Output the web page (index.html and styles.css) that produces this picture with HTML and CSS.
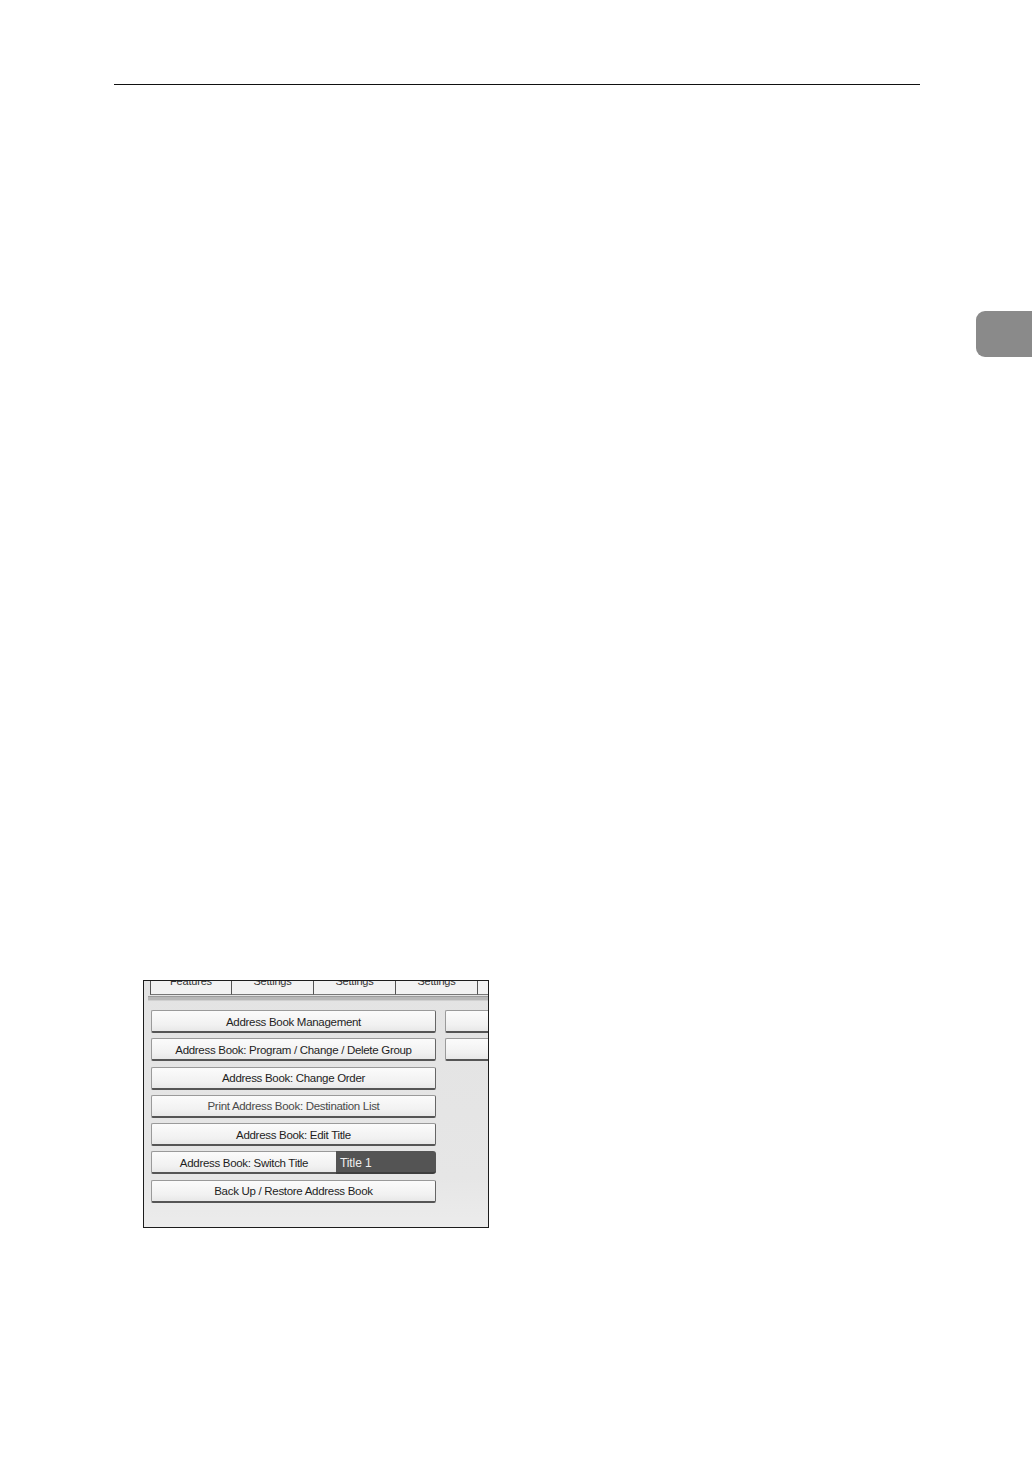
FILE: index.html
```html
<!DOCTYPE html>
<html lang="en">
<head>
<meta charset="utf-8">
<title>Address Book settings</title>
<link rel="stylesheet" href="styles.css">
</head>
<body>
<div class="page">
  <div class="rule"></div>
  <div class="thumb"></div>
  <div class="panel">
    <div class="tabs">
      <div class="tab"><span>Features</span></div>
      <div class="tab"><span>Settings</span></div>
      <div class="tab"><span>Settings</span></div>
      <div class="tab"><span>Settings</span></div>
      <div class="tab tab-last"><span>Settings</span></div>
    </div>
    <div class="groove"></div>
    <div class="content">
      <div class="col-left">
        <div class="btn">Address Book Management</div>
        <div class="btn">Address Book: Program / Change / Delete Group</div>
        <div class="btn">Address Book: Change Order</div>
        <div class="btn btn-dim">Print Address Book: Destination List</div>
        <div class="btn">Address Book: Edit Title</div>
        <div class="switch-row">
          <div class="btn btn-switch">Address Book: Switch Title</div>
          <div class="value">Title 1</div>
        </div>
        <div class="btn">Back Up / Restore Address Book</div>
      </div>
      <div class="col-right">
        <div class="btn"></div>
        <div class="btn"></div>
      </div>
    </div>
  </div>
</div>
</body>
</html>
```
FILE: styles.css
```css
html, body {
  margin: 0;
  padding: 0;
  background: #ffffff;
}

.page {
  width: 1032px;
  height: 1458px;
  overflow: hidden;
  font-family: "Liberation Sans", Arial, sans-serif;
}

.rule {
  margin-top: 84px;
  margin-left: 114px;
  width: 806px;
  height: 1px;
  background: #111;
}

.thumb {
  margin-top: 226px;
  margin-left: 976px;
  width: 56px;
  height: 46px;
  background: #8a8a8a;
  border-radius: 9px 0 0 9px;
}

.panel {
  margin-top: 623px;
  margin-left: 143px;
  width: 346px;
  height: 248px;
  box-sizing: border-box;
  border: 1px solid #1c1c1c;
  background: linear-gradient(#e3e3e3, #e6e6e6 80%, #ececec);
  overflow: hidden;
}

.tabs {
  display: flex;
  height: 14px;
  padding-left: 6px;
}

.tab {
  width: 82px;
  flex-shrink: 0;
  height: 14px;
  box-sizing: border-box;
  border-right: 1px solid #555;
  border-bottom: 1px solid #777;
  background: #f2f2f2;
  overflow: hidden;
  text-align: center;
  font-size: 11px;
  color: #333;
  letter-spacing: -0.2px;
}

.tab:first-child {
  border-left: 1px solid #555;
}

.tab span {
  display: block;
  line-height: 14px;
  margin-top: -7px;
}

.groove {
  margin: 1px 0 0 4px;
  height: 3px;
  background: #b8b8b8;
  border-top: 1px solid #9c9c9c;
  border-bottom: 1px solid #d0d0d0;
}

.content {
  display: flex;
  gap: 9px;
  padding: 9px 0 0 7px;
}

.col-left {
  width: 285px;
  flex-shrink: 0;
  display: grid;
  grid-auto-rows: 23px;
  row-gap: 5.3px;
}

.col-right {
  width: 60px;
  flex-shrink: 0;
  display: grid;
  grid-auto-rows: 23px;
  row-gap: 5.3px;
  align-content: start;
}

.btn {
  box-sizing: border-box;
  height: 23px;
  padding-top: 1px;
  background: linear-gradient(#fbfbfb, #f1f1f1 70%, #e8e8e8);
  border: 1px solid #9a9a9a;
  border-right-color: #666;
  border-bottom: 2px solid #555;
  border-radius: 2px;
  display: flex;
  align-items: center;
  justify-content: center;
  font-size: 11.5px;
  letter-spacing: -0.3px;
  color: #1e1e1e;
  white-space: nowrap;
}

.btn-dim {
  color: #4a4a4a;
}

.switch-row {
  display: flex;
  height: 23px;
}

.btn-switch {
  width: 185px;
  flex-shrink: 0;
  border-right: none;
  border-radius: 2px 0 0 2px;
}

.value {
  flex: 1;
  box-sizing: border-box;
  height: 23px;
  padding-top: 2px;
  background: #545454;
  border-radius: 0 3px 3px 0;
  border-bottom: 2px solid #3e3e3e;
  color: #efefef;
  font-size: 12px;
  padding-left: 4px;
  display: flex;
  align-items: center;
  letter-spacing: -0.1px;
}
```
